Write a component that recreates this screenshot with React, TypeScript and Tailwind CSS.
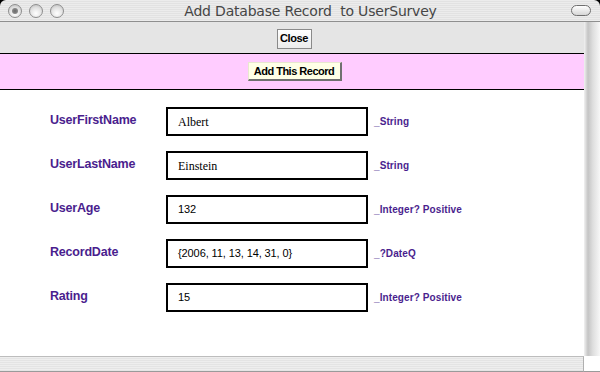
import React from "react";

const rows = [
  { label: "UserFirstName", value: "Albert", type: "_String", serif: true },
  { label: "UserLastName", value: "Einstein", type: "_String", serif: true },
  { label: "UserAge", value: "132", type: "_Integer? Positive", serif: false },
  { label: "RecordDate", value: "{2006, 11, 13, 14, 31, 0}", type: "_?DateQ", serif: false },
  { label: "Rating", value: "15", type: "_Integer? Positive", serif: false },
];

function Light({ dot }: { dot?: boolean }) {
  return (
    <div className="w-[14px] h-[14px] rounded-full border border-[#8e8e8e] bg-[radial-gradient(circle_at_50%_70%,#ffffff_0%,#e2e2e2_55%,#b8b8b8_100%)] flex items-center justify-center">
      {dot && <div className="w-[6px] h-[6px] rounded-full bg-[radial-gradient(circle,#6a6a6a_0%,#9a9a9a_100%)]" />}
    </div>
  );
}

export default function App() {
  return (
    <div className="w-[600px] h-[372px] bg-black overflow-hidden flex flex-col font-['Liberation_Sans',Arial,sans-serif]">
      {/* Title bar */}
      <div className="h-[22px] shrink-0 rounded-t-[6px] border-b border-[#8f8f8f] bg-[repeating-linear-gradient(180deg,#ececec_0px,#ececec_1px,#e2e2e2_1px,#e2e2e2_2px)] flex items-center px-[8px] relative">
        <div className="flex gap-[7px]">
          <Light dot />
          <Light />
          <Light />
        </div>
        <div className="flex-1 text-center text-[14px] text-[#464646] whitespace-pre leading-none pr-[14px] font-['Lucida_Grande','DejaVu_Sans','Liberation_Sans',sans-serif] tracking-[-0.2px]">
          {"Add Database Record  to UserSurvey"}
        </div>
        <div className="w-[20px] h-[11px] rounded-full border border-[#6f6f6f] bg-[linear-gradient(180deg,#ffffff,#d6d6d6)] mr-[1px]" />
      </div>

      {/* Body */}
      <div className="flex flex-1 min-h-0">
        <div className="w-[584px] flex flex-col bg-white">
          <div className="h-[32px] shrink-0 bg-[#e5e5e5] border-b border-black flex items-center justify-center">
            <button className="h-[20px] w-[35px] mt-[2px] ml-[4px] bg-[linear-gradient(180deg,#ffffff,#ececec)] border border-[#8a8a8a] text-[11px] font-bold text-black leading-none tracking-[-0.4px]">
              Close
            </button>
          </div>
          <div className="h-[36px] shrink-0 bg-[#ffccff] border-b border-black flex items-center justify-center">
            <button className="h-[19px] w-[94px] ml-[5px] bg-[#ffffe6] border-t border-l border-[#e8e8d0] border-r-2 border-b-2 border-r-[#707070] border-b-[#707070] text-[11px] font-bold text-black leading-none tracking-[-0.5px] whitespace-nowrap">
              Add This Record
            </button>
          </div>
          <div className="flex-1 flex flex-col pt-[17px] gap-[15px] pl-[50px]">
            {rows.map((r) => (
              <div key={r.label} className="flex items-center h-[29px]">
                <div className="w-[116px] text-[12.5px] font-bold text-[#4a1e8e] -mt-[2px] tracking-[-0.2px]">{r.label}</div>
                <div className="w-[202px] h-[29px] border-2 border-black flex items-center pl-[10px]">
                  <span
                    className={
                      r.serif
                        ? "text-[12px] text-black font-['Liberation_Serif','Times_New_Roman',serif]"
                        : "text-[11px] text-black font-['Liberation_Sans',Arial,sans-serif] tracking-[-0.1px]"
                    }
                  >
                    {r.value}
                  </span>
                </div>
                <div className="ml-[6px] text-[10px] font-bold text-[#4a1e8e] tracking-[0.1px]">{r.type}</div>
              </div>
            ))}
          </div>
        </div>
        <div className="w-[16px] bg-[linear-gradient(90deg,#f2f2f2_0%,#c4c4c4_25%,#dedede_55%,#f7f7f7_100%)]" />
      </div>

      {/* Bottom scrollbar */}
      <div className="h-[16px] shrink-0 flex bg-white">
        <div className="w-[584px] border-t border-[#bdbdbd] border-b border-b-[#9a9a9a] bg-[repeating-linear-gradient(180deg,#eeeeee_0px,#eeeeee_1px,#e4e4e4_1px,#e4e4e4_2px)] border-r border-r-[#b0b0b0]" />
        <div className="flex-1 bg-white border-b border-[#9a9a9a]" />
      </div>
    </div>
  );
}
